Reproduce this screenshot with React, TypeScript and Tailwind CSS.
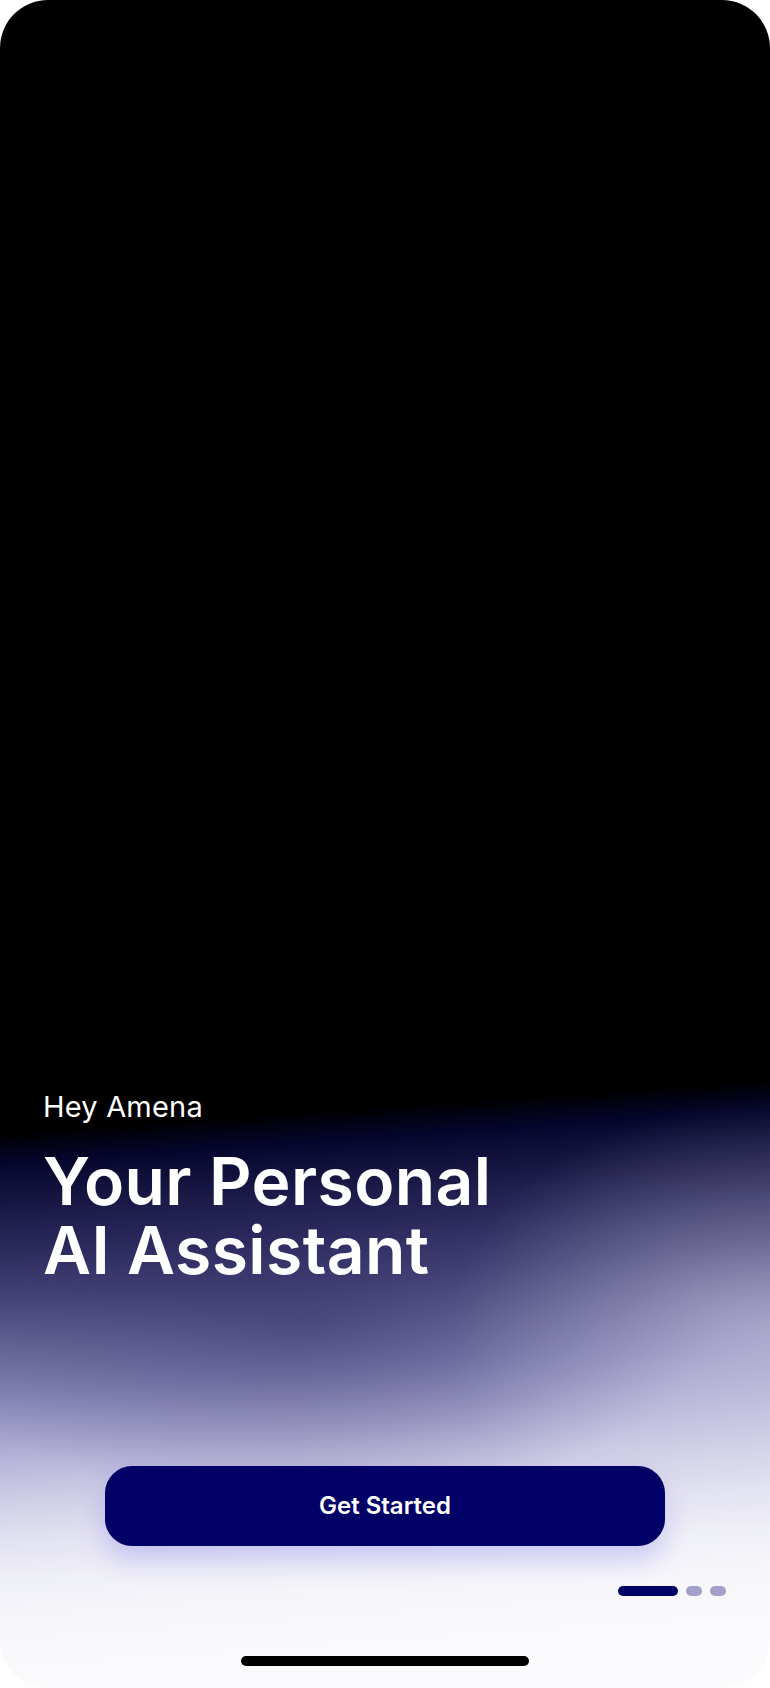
const App = () => {
  return (
    <div className="w-[770px] h-[1688px] bg-white">
      <div className="relative flex h-full w-full flex-col overflow-hidden rounded-[48px] [background:radial-gradient(ellipse_320px_230px_at_100%_1330px,rgba(232,231,242,0.38),transparent),radial-gradient(ellipse_400px_180px_at_40%_1325px,rgba(25,22,80,0.38),transparent),linear-gradient(176deg,#000_0px,#000_1130px,#05052c_1160px,#161540_1198px,#2c2a5c_1245px,#48467a_1295px,#6e6c9e_1348px,#8886b8_1390px,#a4a2cc_1430px,#bcbadc_1466px,#d0cfe7_1500px,#e2e1f1_1536px,#efeff7_1576px,#f7f7fb_1625px,#fbfbfd_1688px)]">
        <div className="flex-1" />

        <div className="px-[43px] font-['Inter',sans-serif] text-white">
          <p className="text-[29px] leading-[34px] font-normal tracking-[0.2px]">Hey Amena</p>
          <h1 className="mt-[23px] text-[66px] leading-[69px] font-semibold tracking-[0.4px]">
            Your Personal
            <br />
            AI Assistant
          </h1>
        </div>

        <div className="mt-[181px] flex justify-center">
          <button className="h-[80px] w-[560px] rounded-[27px] bg-[#000066] font-['Inter',sans-serif] text-[24px] font-semibold text-white shadow-[0_14px_26px_rgba(110,100,230,0.28)]">
            Get Started
          </button>
        </div>

        <div className="mt-[40px] flex justify-end gap-[8px] pr-[44px]">
          <span className="h-[10px] w-[60px] rounded-full bg-[#000066]" />
          <span className="h-[10px] w-[16px] rounded-full bg-[#a29fc8]" />
          <span className="h-[10px] w-[16px] rounded-full bg-[#a29fc8]" />
        </div>

        <div className="mt-[60px] mb-[22px] flex justify-center">
          <span className="h-[10px] w-[288px] rounded-full bg-black" />
        </div>
      </div>
    </div>
  );
};

export default App;
